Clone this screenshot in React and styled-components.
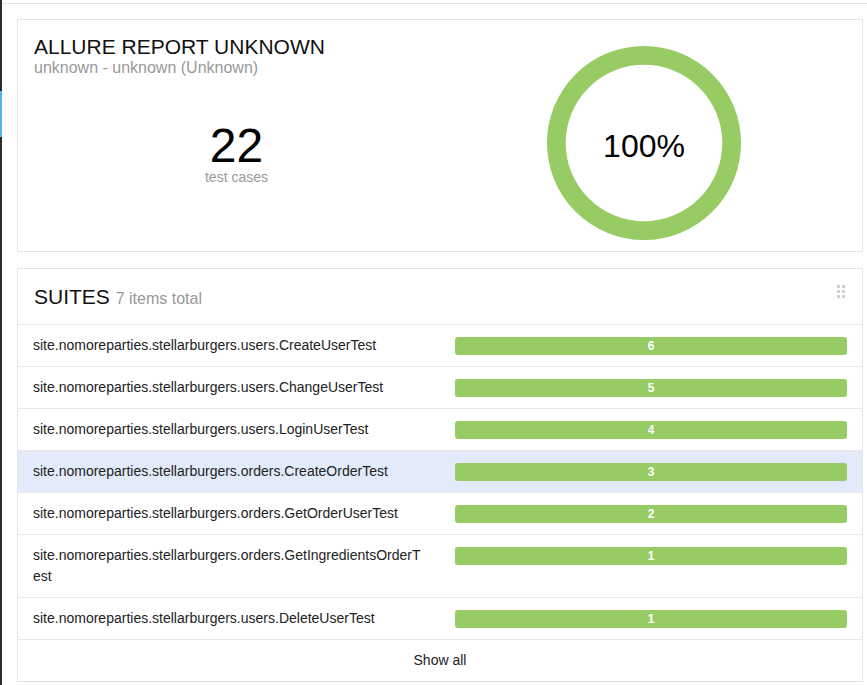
import React from "react";
import styled, { createGlobalStyle } from "styled-components";

const GlobalStyle = createGlobalStyle`
  html, body { margin: 0; padding: 0; background: #fff; }
  body { font-family: "Liberation Sans", Arial, sans-serif; color: #222; }
  * { box-sizing: border-box; }
`;

const Layout = styled.div`
  display: flex;
  min-height: 685px;
`;

const SideNav = styled.div`
  width: 2px;
  flex: none;
  background: #2d2d2d;
`;

const ActiveMarker = styled.div`
  margin-top: 91px;
  height: 46px;
  background: #4fb3f6;
`;

const Main = styled.main`
  flex: 1;
  margin-top: 3px;
  border-top: 1px solid #e4e4e4;
  padding: 15px 4px 0 15px;
`;

const Card = styled.section`
  border: 1px solid #e4e4e4;
  background: #fff;
  margin-bottom: 16px;
`;

const SummaryBody = styled.div`
  display: grid;
  grid-template-columns: 1fr 1fr;
  padding: 15px 15px 11px;
`;

const SummaryLeft = styled.div`
  display: flex;
  flex-direction: column;
`;

const ReportTitle = styled.h2`
  margin: 0 0 0 1px;
  font-size: 21px;
  line-height: 24px;
  font-weight: normal;
  color: #111;
  text-transform: uppercase;
`;

const ReportSub = styled.div`
  margin-left: 1px;
  font-size: 16px;
  line-height: 18px;
  color: #999;
`;

const Stats = styled.div`
  margin-top: 47px;
  text-align: center;
`;

const StatCount = styled.div`
  font-size: 48px;
  line-height: 44px;
  color: #000;
`;

const StatCaption = styled.div`
  font-size: 14px;
  line-height: 18px;
  color: #999;
`;

const SummaryRight = styled.div`
  display: flex;
  justify-content: center;
  align-items: flex-start;
`;

const Donut = styled.svg`
  margin-top: 11px;
  display: block;
`;

const WidgetHeader = styled.div`
  display: flex;
  justify-content: space-between;
  align-items: flex-start;
  height: 56px;
  padding: 16px 15px 0 16px;
  border-bottom: 1px solid #e8e8e8;
`;

const WidgetTitle = styled.h2`
  margin: 0;
  font-size: 21px;
  line-height: 24px;
  font-weight: normal;
  color: #111;
`;

const WidgetCount = styled.span`
  font-size: 16px;
  line-height: 16px;
  color: #999;
`;

const Handle = styled.svg`
  margin-top: 0;
  margin-right: 2px;
  display: block;
`;

const Row = styled.div`
  display: grid;
  grid-template-columns: 407px 1fr;
  padding: 10px 15px;
  border-bottom: 1px solid #e8e8e8;
  font-size: 14px;
  line-height: 21px;
  color: #222;
  background: ${(p) => (p.$active ? "#e3ebfa" : "#fff")};
`;

const Name = styled.div`
  padding-right: 17px;
  word-break: break-all;
`;

const BarCell = styled.div`
  padding-left: 15px;
  padding-top: 2px;
`;

const Bar = styled.div`
  height: 18px;
  line-height: 18px;
  border-radius: 3px;
  background: #97cc64;
  color: #fff;
  font-size: 12px;
  font-weight: bold;
  text-align: center;
`;

const ShowAll = styled.div`
  padding: 10px 15px;
  font-size: 14px;
  line-height: 21px;
  text-align: center;
  color: #222;
`;

const suites = [
  { name: "site.nomoreparties.stellarburgers.users.CreateUserTest", count: 6 },
  { name: "site.nomoreparties.stellarburgers.users.ChangeUserTest", count: 5 },
  { name: "site.nomoreparties.stellarburgers.users.LoginUserTest", count: 4 },
  { name: "site.nomoreparties.stellarburgers.orders.CreateOrderTest", count: 3, active: true },
  { name: "site.nomoreparties.stellarburgers.orders.GetOrderUserTest", count: 2 },
  { name: "site.nomoreparties.stellarburgers.orders.GetIngredientsOrderTest", count: 1 },
  { name: "site.nomoreparties.stellarburgers.users.DeleteUserTest", count: 1 },
];

export default function App() {
  return (
    <>
      <GlobalStyle />
      <Layout>
        <SideNav>
          <ActiveMarker />
        </SideNav>
        <Main>
          <Card>
            <SummaryBody>
              <SummaryLeft>
                <ReportTitle>Allure Report unknown</ReportTitle>
                <ReportSub>unknown - unknown (Unknown)</ReportSub>
                <Stats>
                  <StatCount>22</StatCount>
                  <StatCaption>test cases</StatCaption>
                </Stats>
              </SummaryLeft>
              <SummaryRight>
                <Donut width="194" height="194" viewBox="0 0 194 194">
                  <circle cx="97" cy="97" r="87.65" fill="none" stroke="#97cc64" strokeWidth="18.7" />
                  <text
                    x="97"
                    y="110.5"
                    textAnchor="middle"
                    fontSize="32"
                    fontFamily="Liberation Sans, Arial, sans-serif"
                    fill="#000"
                  >
                    100%
                  </text>
                </Donut>
              </SummaryRight>
            </SummaryBody>
          </Card>
          <Card>
            <WidgetHeader>
              <WidgetTitle>
                SUITES <WidgetCount>7 items total</WidgetCount>
              </WidgetTitle>
              <Handle width="8" height="13" viewBox="0 0 8 13">
                {[0, 5, 10].map((y) =>
                  [0, 5].map((x) => <rect key={`${x}-${y}`} x={x} y={y} width="3" height="3" fill="#cfcfcf" />)
                )}
              </Handle>
            </WidgetHeader>
            {suites.map((s) => (
              <Row key={s.name} $active={s.active}>
                <Name>{s.name}</Name>
                <BarCell>
                  <Bar>{s.count}</Bar>
                </BarCell>
              </Row>
            ))}
            <ShowAll>Show all</ShowAll>
          </Card>
        </Main>
      </Layout>
    </>
  );
}
